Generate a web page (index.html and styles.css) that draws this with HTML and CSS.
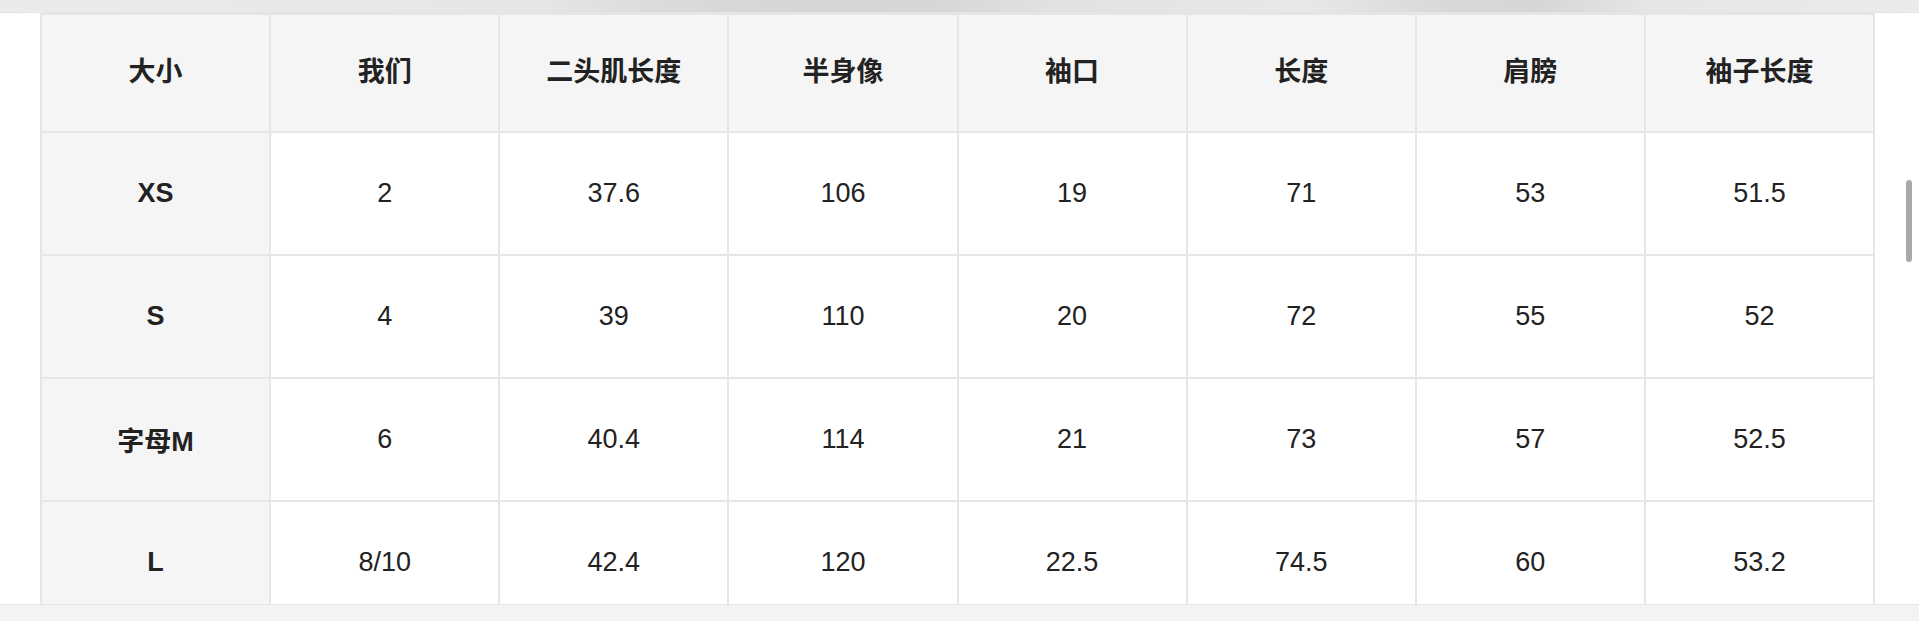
FILE: index.html
```html
<!DOCTYPE html>
<html lang="zh">
<head>
<meta charset="utf-8">
<title>尺码表</title>
<link rel="stylesheet" href="styles.css">
</head>
<body>
<div class="page">
  <div class="topbar"></div>
  <div class="scroll">
    <table class="size-table">
      <thead>
        <tr>
          <th>大小</th><th>我们</th><th>二头肌长度</th><th>半身像</th><th>袖口</th><th>长度</th><th>肩膀</th><th>袖子长度</th>
        </tr>
      </thead>
      <tbody>
        <tr><th>XS</th><td>2</td><td>37.6</td><td>106</td><td>19</td><td>71</td><td>53</td><td>51.5</td></tr>
        <tr><th>S</th><td>4</td><td>39</td><td>110</td><td>20</td><td>72</td><td>55</td><td>52</td></tr>
        <tr><th>字母M</th><td>6</td><td>40.4</td><td>114</td><td>21</td><td>73</td><td>57</td><td>52.5</td></tr>
        <tr><th>L</th><td>8/10</td><td>42.4</td><td>120</td><td>22.5</td><td>74.5</td><td>60</td><td>53.2</td></tr>
      </tbody>
    </table>
    <div class="scroll-thumb"></div>
  </div>
  <div class="bottombar"></div>
</div>
</body>
</html>
```
FILE: styles.css
```css
html, body {
  margin: 0;
  padding: 0;
  background: #ffffff;
}
body {
  font-family: "Liberation Sans", "Noto Sans CJK SC", sans-serif;
  color: #222222;
}
.page {
  height: 621px;
  display: flex;
  flex-direction: column;
  overflow: hidden;
}
.topbar {
  height: 12px;
  flex: none;
  background: linear-gradient(90deg, #ebebeb 0%, #e9e9e9 12%, #e6e6e6 28%, #dadada 35%, #d5d5d5 43%, #d7d7d7 49%, #e2e2e2 55%, #e8e8e8 68%, #d9d9d9 75%, #d6d6d6 80%, #e6e6e6 86%, #ebebeb 100%);
  border-bottom: 1px solid #e4e4e4;
}
.scroll {
  flex: 1;
  overflow: hidden;
  position: relative;
  padding-left: 40px;
}
.size-table {
  border-collapse: collapse;
  table-layout: fixed;
  width: 1835px;
}
.size-table th,
.size-table td {
  border: 2px solid #e6e6e6;
  text-align: center;
  vertical-align: middle;
  font-size: 27px;
  padding: 0;
}
.size-table thead th {
  height: 109px;
  padding-bottom: 7px;
  background: #f5f5f5;
  font-weight: 700;
  font-family: "Noto Sans CJK SC", "Liberation Sans", sans-serif;
}
.size-table tbody th {
  background: #f5f5f5;
  font-weight: 700;
}
.size-table tbody td,
.size-table tbody th {
  height: 121px;
}
.size-table td {
  font-weight: 400;
  background: #ffffff;
}
.scroll-thumb {
  position: absolute;
  top: 167px;
  right: 7px;
  width: 6px;
  height: 82px;
  border-radius: 3px;
  background: #a9a9a9;
}
.bottombar {
  height: 16px;
  flex: none;
  background: #f3f3f3;
  border-top: 1px solid #e6e6e6;
}
```
